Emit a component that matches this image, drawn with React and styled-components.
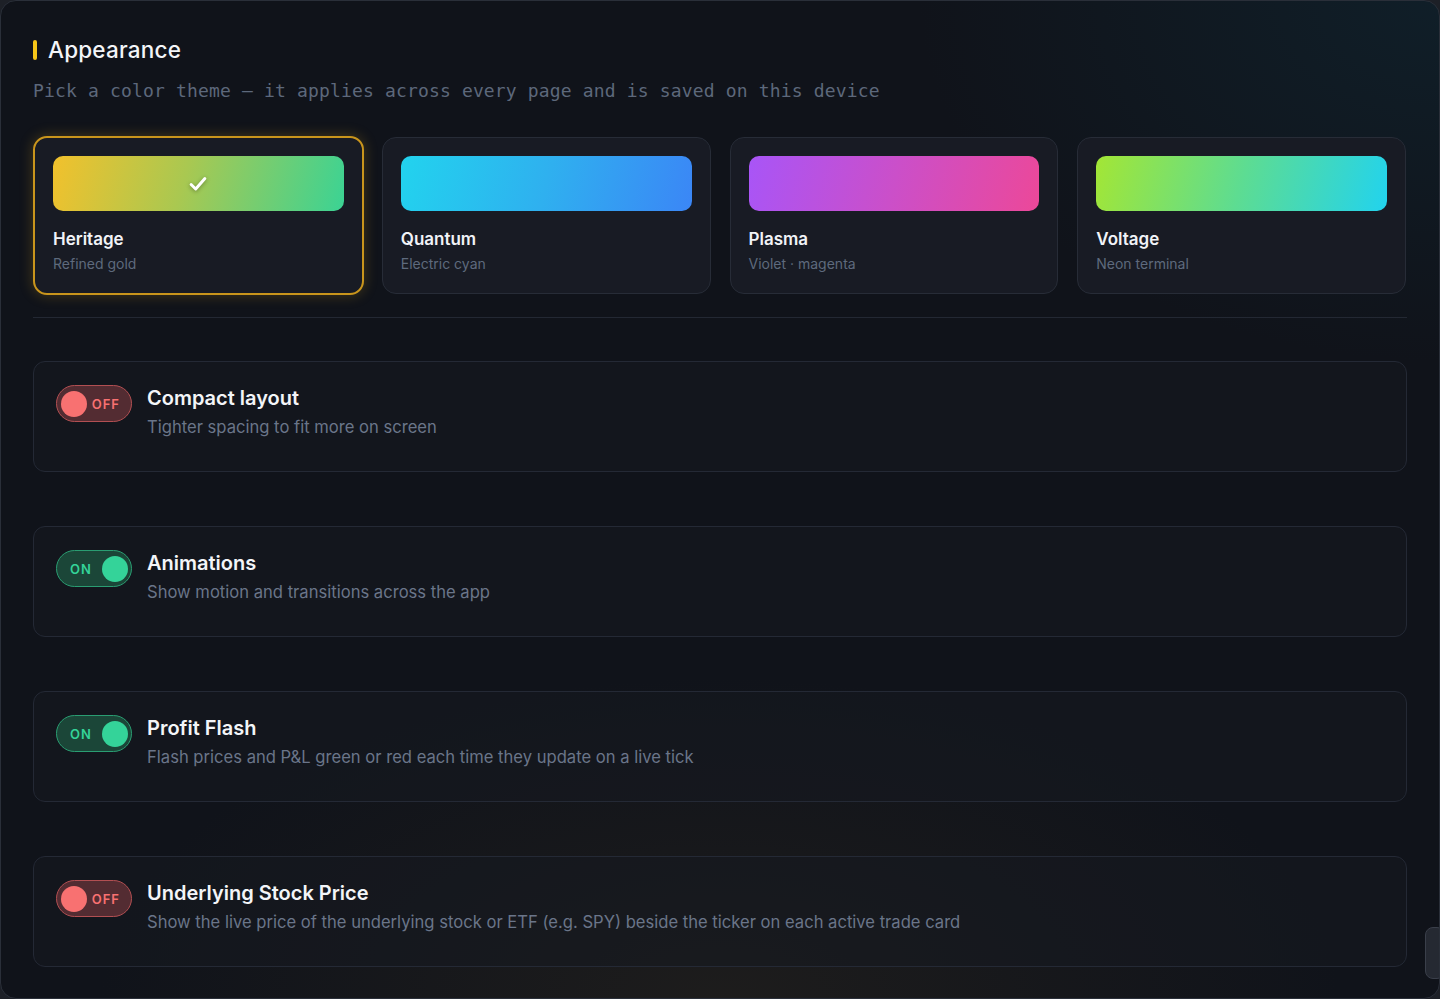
import React, { useState } from 'react'
import styled, { createGlobalStyle } from 'styled-components'

const GlobalStyle = createGlobalStyle`
  html, body {
    margin: 0;
    padding: 0;
    background: #1d2027;
  }
  body {
    font-family: Inter, "Noto Sans", sans-serif;
    color: #f1f3f7;
  }
`

const Panel = styled.div`
  position: relative;
  box-sizing: border-box;
  width: 1440px;
  height: 999px;
  overflow: hidden;
  border: 1px solid #2a2f39;
  border-radius: 16px;
  padding: 33px 32px 0 32px;
  background:
    radial-gradient(ellipse 620px 320px at 50% 100%, rgba(40, 36, 30, 0.55), rgba(40, 36, 30, 0) 100%),
    radial-gradient(ellipse 520px 360px at 100% 0%, rgba(16, 40, 52, 0.55), rgba(16, 40, 52, 0) 100%),
    #10131a;
`

const Heading = styled.h2`
  display: flex;
  align-items: center;
  gap: 11px;
  margin: 0;
  font-size: 22.5px;
  font-weight: 500;
  line-height: 32px;
  color: #f3f5f8;
  letter-spacing: 0.2px;

  &::before {
    content: '';
    width: 4px;
    height: 20px;
    border-radius: 2px;
    background: #f5c518;
  }
`

const Lead = styled.p`
  margin: 13px 0 0 0;
  font-family: "DejaVu Sans Mono", "Liberation Mono", monospace;
  font-size: 18px;
  letter-spacing: 0.16px;
  line-height: 24px;
  color: #5d687b;
`

const ThemeGrid = styled.div`
  display: grid;
  grid-template-columns: repeat(4, 1fr);
  gap: 17px;
  margin-top: 33px;
`

const ThemeCard = styled.div`
  box-sizing: border-box;
  display: flex;
  flex-direction: column;
  height: ${p => (p.$active ? '159px' : '157px')};
  margin: ${p => (p.$active ? '0' : '1px')};
  padding: 18px 18px 0;
  cursor: pointer;
  border-radius: 14px;
  border: ${p => (p.$active ? '2px solid #c9951c' : '1px solid #272c37')};
  background: #181b24;
  box-shadow: ${p => (p.$active ? '0 0 14px rgba(214, 160, 30, 0.28)' : 'none')};
`

const Swatch = styled.div`
  display: flex;
  align-items: center;
  justify-content: center;
  height: 55px;
  border-radius: 10px;
  background: ${p => p.$gradient};
`

const ThemeName = styled.div`
  margin-top: 17px;
  font-size: 17px;
  font-weight: 600;
  color: #f1f3f7;
  line-height: 22px;
`

const ThemeNote = styled.div`
  margin-top: 5px;
  font-size: 14px;
  color: #5e6a7d;
  line-height: 18px;
`

const Divider = styled.hr`
  margin: 22px 0 0 0;
  border: none;
  border-top: 1px solid #232833;
`

const SettingList = styled.div`
  display: flex;
  flex-direction: column;
  gap: 54px;
  margin-top: 43px;
`

const SettingRow = styled.div`
  box-sizing: border-box;
  display: flex;
  align-items: flex-start;
  gap: 15px;
  height: 111px;
  padding: 23px 22px 0;
  border: 1px solid #242935;
  border-radius: 12px;
  background: rgba(22, 25, 33, 0.55);
`

const Toggle = styled.button`
  position: relative;
  box-sizing: border-box;
  flex: none;
  display: flex;
  align-items: center;
  justify-content: ${p => (p.$on ? 'flex-start' : 'flex-end')};
  width: 76px;
  height: 37px;
  padding: 0 11px 0 13px;
  border-radius: 19px;
  cursor: pointer;
  font-family: inherit;
  font-size: 13px;
  font-weight: 600;
  letter-spacing: 1px;
  border: 1.5px solid ${p => (p.$on ? '#2a9d72' : '#b24f52')};
  background: ${p => (p.$on ? '#1b4638' : '#532c32')};
  color: ${p => (p.$on ? '#34d399' : '#f87171')};

  &::after {
    content: '';
    position: absolute;
    top: 4.5px;
    ${p => (p.$on ? 'right: 3.5px;' : 'left: 3.5px;')}
    width: 26px;
    height: 26px;
    border-radius: 50%;
    background: ${p => (p.$on ? '#34d399' : '#f87171')};
  }
`

const SettingText = styled.div`
  display: flex;
  flex-direction: column;
`

const SettingTitle = styled.div`
  margin-top: 1px;
  font-size: 20px;
  font-weight: 600;
  line-height: 24px;
  color: #f3f5f8;
`

const SettingDesc = styled.div`
  margin-top: 5px;
  font-size: 16.6px;
  line-height: 24px;
  color: #6a7589;
`

const ScrollThumb = styled.div`
  position: absolute;
  right: -6px;
  top: 926px;
  width: 18px;
  height: 50px;
  border-radius: 8px;
  border: 1px solid #3a3f4a;
  background: #252932;
`

const Check = () => (
  <svg width="22" height="22" viewBox="0 0 24 24" fill="none" stroke="#fff" strokeWidth="3.2" strokeLinecap="round" strokeLinejoin="round" style={{ filter: 'drop-shadow(0 1px 2px rgba(0,0,0,0.35))' }}>
    <path d="M4.5 12.5l5 5L19.5 6" />
  </svg>
)

const themes = [
  { id: 'heritage', name: 'Heritage', note: 'Refined gold', gradient: 'linear-gradient(105deg, #f2c12c 0%, #a9c851 45%, #3bd394 100%)' },
  { id: 'quantum', name: 'Quantum', note: 'Electric cyan', gradient: 'linear-gradient(105deg, #22d3ee 0%, #2fb0ef 50%, #3b86f6 100%)' },
  { id: 'plasma', name: 'Plasma', note: 'Violet · magenta', gradient: 'linear-gradient(105deg, #a855f7 0%, #cb4fc9 50%, #ec4899 100%)' },
  { id: 'voltage', name: 'Voltage', note: 'Neon terminal', gradient: 'linear-gradient(105deg, #a3e635 0%, #5ddc92 50%, #22d3ee 100%)' },
]

const initialSettings = [
  { id: 'compact', title: 'Compact layout', desc: 'Tighter spacing to fit more on screen', on: false },
  { id: 'anim', title: 'Animations', desc: 'Show motion and transitions across the app', on: true },
  { id: 'flash', title: 'Profit Flash', desc: 'Flash prices and P&L green or red each time they update on a live tick', on: true },
  { id: 'underlying', title: 'Underlying Stock Price', desc: 'Show the live price of the underlying stock or ETF (e.g. SPY) beside the ticker on each active trade card', on: false },
]

const App = () => {
  const [theme, setTheme] = useState('heritage')
  const [settings, setSettings] = useState(initialSettings)

  const flip = (id) => {
    setSettings(settings.map(s => (s.id === id ? { ...s, on: !s.on } : s)))
  }

  return (
    <>
      <GlobalStyle />
      <Panel>
        <Heading>Appearance</Heading>
        <Lead>Pick a color theme — it applies across every page and is saved on this device</Lead>

        <ThemeGrid>
          {themes.map(t => (
            <ThemeCard key={t.id} role="button" $active={theme === t.id} onClick={() => setTheme(t.id)}>
              <Swatch $gradient={t.gradient}>{theme === t.id && <Check />}</Swatch>
              <ThemeName>{t.name}</ThemeName>
              <ThemeNote>{t.note}</ThemeNote>
            </ThemeCard>
          ))}
        </ThemeGrid>

        <Divider />

        <SettingList>
          {settings.map(s => (
            <SettingRow key={s.id}>
              <Toggle $on={s.on} onClick={() => flip(s.id)}>{s.on ? 'ON' : 'OFF'}</Toggle>
              <SettingText>
                <SettingTitle>{s.title}</SettingTitle>
                <SettingDesc>{s.desc}</SettingDesc>
              </SettingText>
            </SettingRow>
          ))}
        </SettingList>

        <ScrollThumb />
      </Panel>
    </>
  )
}

export default App
